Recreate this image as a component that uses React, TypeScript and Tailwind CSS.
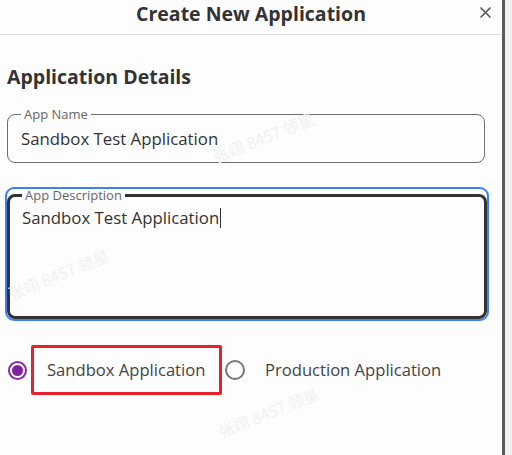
import React from "react";

const font = { fontFamily: "'Open Sans', 'Noto Sans', sans-serif" };

function Watermark({ className }: { className: string }) {
  return (
    <div
      className={`pointer-events-none absolute select-none whitespace-nowrap text-[16px] text-[#f1f1f1] -rotate-[22deg] ${className}`}
      style={{ fontFamily: "'Noto Sans CJK SC', sans-serif" }}
    >
      张翊 8457 领星
    </div>
  );
}

export default function App() {
  return (
    <div className="relative flex h-[455px] w-[512px] overflow-hidden bg-[#fdfdfd]" style={font}>
      <div className="relative flex w-[502px] flex-col">
        <Watermark className="left-[210px] top-[125px]" />
        <Watermark className="left-[5px] top-[262px]" />
        <Watermark className="left-[215px] top-[400px]" />
        <div className="relative flex h-[35px] items-start justify-center border-b border-[#dedede]">
          <span className="text-[19.5px] font-bold leading-[28px] text-[#333]">Create New Application</span>
          <svg className="absolute right-[11px] top-[7px]" width="11" height="11" viewBox="0 0 11 11">
            <path d="M1 1L10 10M10 1L1 10" stroke="#555" strokeWidth="1.6" strokeLinecap="round" />
          </svg>
        </div>
        <div className="flex flex-col px-[7px]">
          <h2 className="mt-[30px] text-[19.5px] font-bold leading-[24px] text-[#333]">Application Details</h2>
          <fieldset className="mt-[19px] h-[55px] w-[478px] rounded-[8px] border border-[#6f6f6f] px-[13px]">
            <legend className="px-[3px] text-[13px] leading-[12px] text-[#666]">App Name</legend>
            <div className="pt-[9px] text-[16.8px] leading-[20px] text-[#333]">Sandbox Test Application</div>
          </fieldset>
          <div className="ml-[-2px] mt-[24px] w-[484px] rounded-[9px] border-2 border-[#3b82f6]">
            <fieldset className="h-[130px] rounded-[8px] border-[3px] border-[#333] px-[12px]">
              <legend className="px-[3px] text-[13px] leading-[12px] text-[#666]">App Description</legend>
              <div className="flex items-center pt-[7px] text-[16.8px] leading-[20px] text-[#333]">
                Sandbox Test Application
                <span className="ml-[1px] inline-block h-[20px] w-[1px] bg-[#333]" />
              </div>
            </fieldset>
          </div>
          <div className="mt-[24px] flex items-center">
            <span className="ml-[1px] flex h-[19px] w-[19px] items-center justify-center rounded-full border-2 border-[#8a2aa8]">
              <span className="h-[11px] w-[11px] rounded-full bg-[#7e22a0]" />
            </span>
            <div className="ml-[4px] flex h-[50px] w-[191px] items-center rounded-[2px] border-[3px] border-[#e8202a] pl-[13px] text-[16.6px] text-[#444]">
              Sandbox Application
            </div>
            <span className="ml-[3px] h-[20px] w-[20px] rounded-full border-2 border-[#777]" />
            <span className="ml-[20px] text-[16.6px] text-[#444]">Production Application</span>
          </div>
        </div>
      </div>
      <div className="h-full w-[3px] bg-[#5a5a5a]" />
      <div className="h-full flex-1 bg-[#f0f0f0]" />
    </div>
  );
}
